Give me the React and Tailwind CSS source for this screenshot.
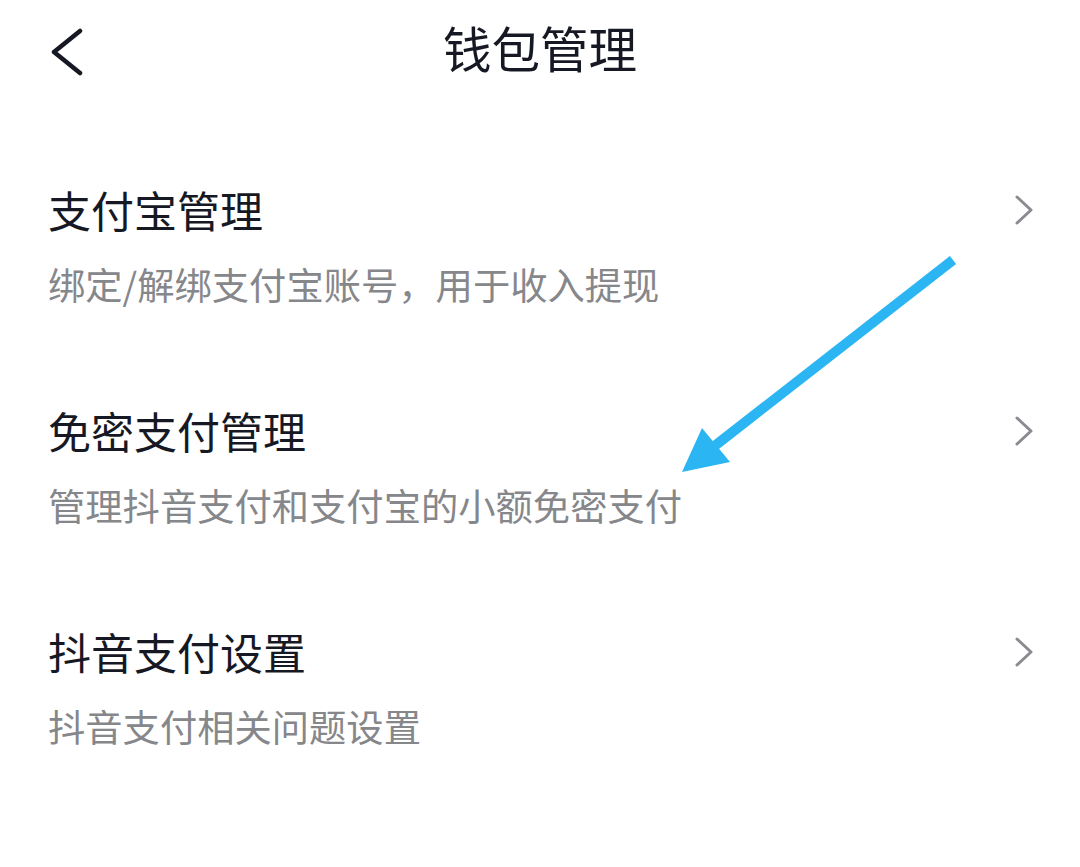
import { useState } from 'react'

const ITEMS = [
  { title: '支付宝管理', desc: '绑定/解绑支付宝账号，用于收入提现' },
  { title: '免密支付管理', desc: '管理抖音支付和支付宝的小额免密支付' },
  { title: '抖音支付设置', desc: '抖音支付相关问题设置' },
]

const Chevron = ({ className }) => (
  <svg viewBox="0 0 20 30" className={className} fill="none" stroke="currentColor" strokeWidth="3" strokeLinecap="round" strokeLinejoin="round">
    <path d="M3 2 L17 15 L3 28" />
  </svg>
)

export default function App() {
  const [active, setActive] = useState(null)

  return (
    <div className="relative w-[1080px] h-[867px] bg-white overflow-hidden" style={{ fontFamily: '"Noto Sans CJK SC", "Noto Sans", sans-serif' }}>
      {/* 顶部导航 */}
      <div className="relative h-[96px] flex items-center justify-center">
        <button className="absolute left-[50px] top-[28px] text-[#161823]">
          <svg viewBox="0 0 34 48" className="w-[34px] h-[48px]" fill="none" stroke="currentColor" strokeWidth="4.5" strokeLinecap="round" strokeLinejoin="round">
            <path d="M30 3 L4 24 L30 45" />
          </svg>
        </button>
        <h1 className="text-[48.5px] leading-[56px] text-[#161823] font-normal -mt-[2px]">钱包管理</h1>
      </div>

      {/* 列表 */}
      <div className="mt-[87px] flex flex-col gap-[98px]">
        {ITEMS.map((it, i) => (
          <div
            key={it.title}
            onClick={() => setActive(i)}
            className={`flex items-start justify-between pl-[48px] pr-[46px] ${active === i ? 'opacity-90' : ''}`}
          >
            <div className="flex flex-col">
              <p className="text-[43px] leading-[52px] text-[#161823]">{it.title}</p>
              <p className="mt-[27px] text-[37.3px] leading-[44px] text-[#86878b]">{it.desc}</p>
            </div>
            <Chevron className="w-[20px] h-[30px] mt-[12px] text-[#8a8b90]" />
          </div>
        ))}
      </div>

      {/* 标注箭头 */}
      <svg className="absolute left-0 top-0 pointer-events-none" width="1080" height="867" viewBox="0 0 1080 867">
        <line x1="953" y1="260" x2="712" y2="448" stroke="#2bb5f2" strokeWidth="10" />
        <polygon points="682,472 702,428 730,462" fill="#2bb5f2" />
      </svg>
    </div>
  )
}
